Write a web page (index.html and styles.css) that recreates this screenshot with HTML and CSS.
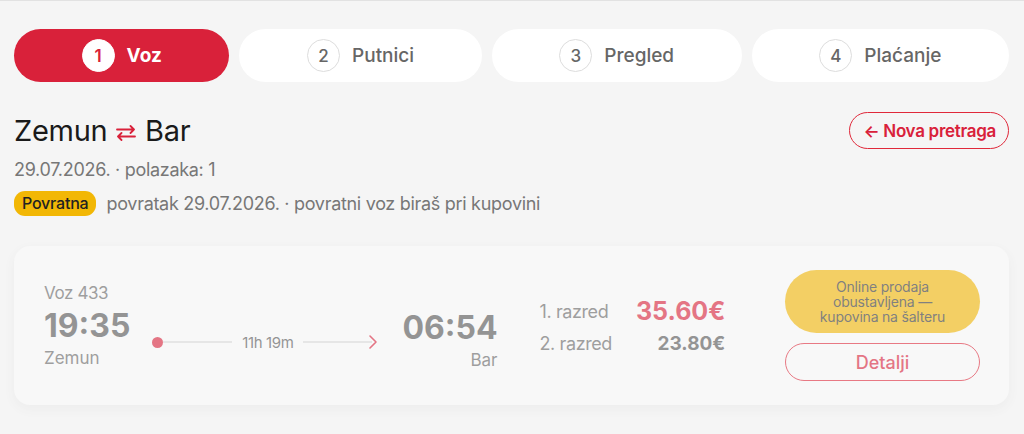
FILE: index.html
```html
<!DOCTYPE html>
<html lang="sr">
<head>
    <meta charset="UTF-8">
    <meta name="viewport" content="width=device-width, initial-scale=1.0">
    <title>Kupovina karte</title>
    <link rel="stylesheet" href="styles.css">
</head>
<body>
    <div class="page">
        <div class="steps">
            <div class="step active"><span class="step-num">1</span>Voz</div>
            <div class="step"><span class="step-num">2</span>Putnici</div>
            <div class="step"><span class="step-num">3</span>Pregled</div>
            <div class="step"><span class="step-num">4</span>Plaćanje</div>
        </div>

        <div class="route-head">
            <div>
                <h1 class="route-title">Zemun
                    <svg class="swap" width="20" height="16" viewBox="0 0 20 16"><path d="M1 4.5H18M14.5 1L18 4.5L14.5 8M19 11.5H2M5.5 8L2 11.5L5.5 15" fill="none" stroke="#d9213a" stroke-width="1.8" stroke-linecap="round" stroke-linejoin="round"/></svg>
                    Bar</h1>
                <div class="route-meta">29.07.2026. · polazaka: 1</div>
                <div class="route-return">
                    <span class="badge">Povratna</span>
                    povratak 29.07.2026. · povratni voz biraš pri kupovini
                </div>
            </div>
            <button class="new-search">&larr; Nova pretraga</button>
        </div>

        <div class="train-card">
            <div class="stop">
                <div class="train-no">Voz 433</div>
                <div class="time">19:35</div>
                <div class="station">Zemun</div>
            </div>
            <div class="timeline">
                <span class="dot"></span>
                <span class="line"></span>
                <span class="duration">11h 19m</span>
                <span class="line"></span>
                <svg class="chev" width="10" height="16" viewBox="0 0 10 16"><path d="M2 2l6 6-6 6" fill="none" stroke="#d9213a" stroke-width="1.6" stroke-linecap="round" stroke-linejoin="round"/></svg>
            </div>
            <div class="stop arrive">
                <div class="time">06:54</div>
                <div class="station">Bar</div>
            </div>
            <div class="prices">
                <span class="cls">1. razred</span><span class="price first">35.60€</span>
                <span class="cls">2. razred</span><span class="price">23.80€</span>
            </div>
            <div class="actions">
                <div class="notice">Online prodaja<br>obustavljena —<br>kupovina na šalteru</div>
                <button class="details">Detalji</button>
            </div>
        </div>
    </div>
</body>
</html>
```

FILE: styles.css
```css
body {
    margin: 0;
    background-color: #f5f5f5;
    font-family: Inter, "Open Sans", sans-serif;
    color: #1a1a1a;
}
.page {
    border-top: 1px solid #e2e2e2;
    padding: 28px 15px 30px 14px;
}
.steps {
    display: flex;
    gap: 10px;
}
.step {
    flex: 1 1 auto;
    height: 53px;
    border-radius: 27px;
    background-color: #fff;
    display: flex;
    align-items: center;
    justify-content: center;
    gap: 12px;
    font-size: 19px;
    font-weight: 500;
    color: #666;
}
.step-num {
    width: 31px;
    height: 31px;
    border-radius: 50%;
    border: 1.5px solid #ddd;
    display: flex;
    align-items: center;
    justify-content: center;
    font-size: 17px;
    color: #666;
}
.step.active {
    background-color: #d9213a;
    color: #fff;
    font-weight: 700;
}
.step.active .step-num {
    background-color: #fff;
    border-color: #fff;
    color: #d9213a;
    font-weight: 600;
}
.route-head {
    display: flex;
    justify-content: space-between;
    align-items: flex-start;
    margin-top: 32px;
}
.route-title {
    margin: 0;
    font-size: 29px;
    font-weight: 400;
    line-height: 34px;
    letter-spacing: -0.3px;
}
.swap {
    margin: 0 1px;
}
.route-meta {
    margin-top: 11px;
    font-size: 18px;
    line-height: 22px;
    color: #777;
    letter-spacing: -0.3px;
}
.route-return {
    margin-top: 10px;
    display: flex;
    align-items: center;
    gap: 10px;
    font-size: 18px;
    line-height: 22px;
    color: #777;
    letter-spacing: -0.3px;
}
.badge {
    background-color: #f2b705;
    color: #222;
    font-size: 16px;
    font-weight: 500;
    line-height: 25px;
    padding: 0 8px;
    border-radius: 11px;
    letter-spacing: -0.2px;
}
.new-search {
    font-family: inherit;
    margin-top: -2px;
    background: none;
    border: 1.5px solid #e0283a;
    color: #d9213a;
    border-radius: 20px;
    height: 37px;
    padding: 0 12px 0 13px;
    font-size: 17px;
    font-weight: 600;
    letter-spacing: -0.3px;
    cursor: pointer;
}
.train-card {
    margin-top: 30px;
    background-color: #fafafa;
    border-radius: 16px;
    box-shadow: 0 4px 12px rgba(0, 0, 0, 0.05);
    height: 159px;
    box-sizing: border-box;
    padding: 0 29px 0 30px;
    display: flex;
    align-items: center;
    opacity: 0.6;
}
.stop {
    display: flex;
    flex-direction: column;
}
.train-no {
    font-size: 17px;
    line-height: 20px;
    color: #666;
    letter-spacing: -0.4px;
}
.time {
    font-size: 32px;
    font-weight: 700;
    color: #555;
    line-height: 36px;
    margin-top: 5px;
}
.station {
    font-size: 17px;
    line-height: 20px;
    color: #666;
    margin-top: 4px;
}
.arrive {
    align-items: flex-end;
    margin-top: 28px;
}
.arrive .time {
    margin-top: 0;
}
.timeline {
    width: 226px;
    margin: 33px 24px 0 22px;
    display: flex;
    align-items: center;
}
.dot {
    width: 11px;
    height: 11px;
    border-radius: 50%;
    background-color: #d9213a;
}
.line {
    flex: 1;
    height: 1.5px;
    background-color: #ddd;
}
.duration {
    font-size: 15px;
    color: #555;
    padding: 0 10px;
    letter-spacing: -0.4px;
}
.chev {
    margin-left: -4px;
}
.prices {
    margin-left: 42px;
    display: grid;
    grid-template-columns: auto auto;
    column-gap: 24px;
    row-gap: 6px;
    align-items: center;
}
.cls {
    font-size: 18px;
    color: #666;
    letter-spacing: -0.4px;
}
.price {
    text-align: right;
    font-size: 19px;
    font-weight: 700;
    color: #555;
}
.price.first {
    font-size: 25px;
    color: #d9213a;
}
.actions {
    margin-left: auto;
    width: 195px;
    display: flex;
    flex-direction: column;
    gap: 10px;
}
.notice {
    background-color: #f2b705;
    border-radius: 32px;
    height: 63px;
    display: flex;
    align-items: center;
    justify-content: center;
    text-align: center;
    font-size: 14px;
    line-height: 15px;
    color: #333;
    letter-spacing: -0.2px;
}
.details {
    font-family: inherit;
    height: 38px;
    background: none;
    border: 1.5px solid #e0283a;
    border-radius: 19px;
    color: #d9213a;
    font-size: 18px;
    font-weight: 500;
    cursor: pointer;
}
```
